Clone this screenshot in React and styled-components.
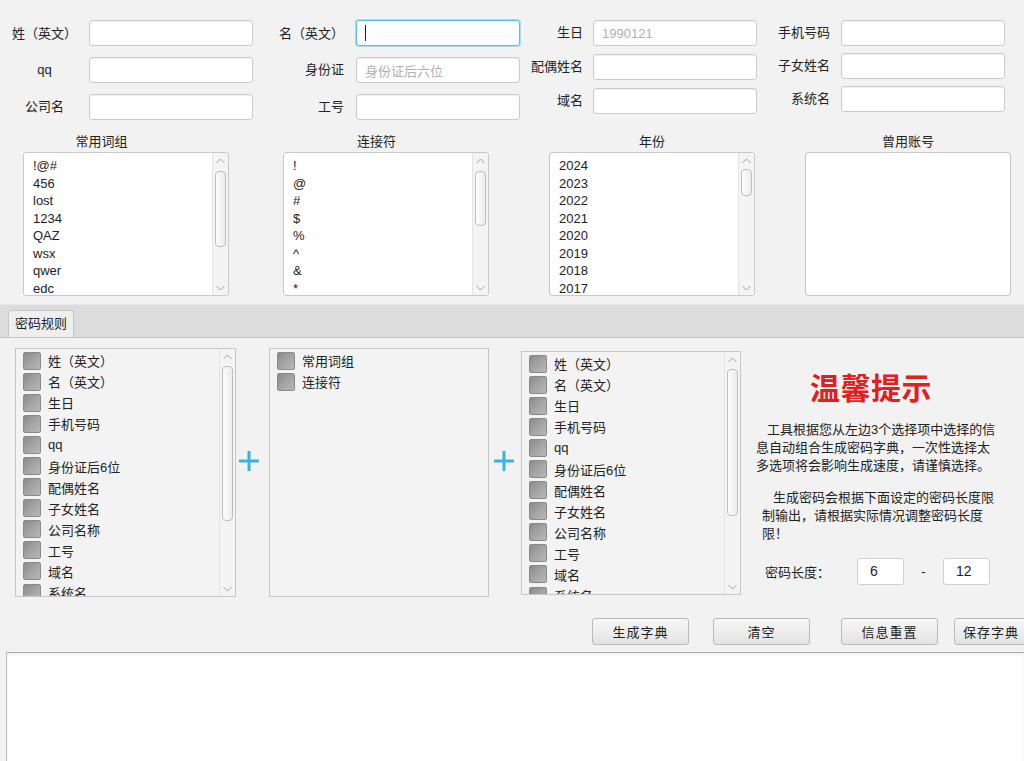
import React from 'react';
import styled, { createGlobalStyle } from 'styled-components';

const GlobalStyle = createGlobalStyle`
  html, body { margin: 0; padding: 0; background: #f2f2f2; }
  body {
    font-family: "Liberation Sans", "Noto Sans CJK SC", sans-serif;
    font-size: 13px;
    color: #222;
    text-spacing-trim: space-all;
  }
  * { box-sizing: border-box; }
`;

const Page = styled.div`
  width: 1024px;
  height: 761px;
  overflow: hidden;
  display: flex;
  flex-direction: column;
  background: #f2f2f2;
`;

/* centred full-width brackets, as the reference font draws them */
const Paren = styled.span`
  font-family: "Noto Sans CJK TC", "Noto Sans CJK SC", sans-serif;
`;

const Label = ({ text }) => (
  <>
    {text.split(/([（）])/).filter(Boolean).map((part, i) =>
      part === '（' || part === '）' ? <Paren key={i}>{part}</Paren> : <React.Fragment key={i}>{part}</React.Fragment>
    )}
  </>
);

/* ---------- top form ---------- */
const TopForm = styled.div`
  display: flex;
  align-items: flex-start;
  padding-top: 20px;
  height: 120px;
`;

const FieldColumn = styled.div`
  display: grid;
  grid-template-columns: ${p => p.$labelWidth}px 164px;
  row-gap: ${p => p.$gap}px;
`;

const FieldLabel = styled.div`
  height: 26px;
  line-height: 26px;
  text-align: ${p => p.$align};
  padding-right: ${p => p.$pad}px;
  white-space: nowrap;
  font-size: 13px;
  color: #222;
`;

const Field = styled.div`
  height: 26px;
  background: #fff;
  border: 1px solid ${p => (p.$focused ? '#5cc0e6' : '#cbcbcb')};
  border-radius: 3px;
  box-shadow: ${p => (p.$focused ? '0 0 0 1px #a6dcf1' : 'inset 0 1px 1px rgba(0,0,0,0.06)')};
  padding-left: 8px;
  display: flex;
  align-items: center;
  color: #b0b0b0;
  font-size: 13px;
  white-space: nowrap;
`;

const Caret = styled.span`
  width: 1px;
  height: 16px;
  background: #222;
`;

/* ---------- lists ---------- */
const ListsRow = styled.div`
  display: flex;
  margin-top: 13px;
`;

const ListGroup = styled.div`
  display: flex;
  flex-direction: column;
  margin-left: ${p => p.$left}px;
  width: 206px;
`;

const GroupTitle = styled.div`
  height: 18px;
  line-height: 18px;
  text-align: center;
  padding-right: ${p => p.$shift}px;
  font-size: 13px;
`;

const ListBox = styled.div`
  margin-top: 1px;
  height: 144px;
  background: #fff;
  border: 1px solid #c9c9c9;
  border-radius: 3px;
  display: flex;
  overflow: hidden;
`;

const ListItems = styled.div`
  flex: 1;
  padding: 4px 0 0 9px;
  line-height: 17.5px;
  font-size: 13px;
  overflow: hidden;
`;

const ScrollBar = styled.div`
  width: 16px;
  display: flex;
  flex-direction: column;
  align-items: center;
  background: #f4f4f4;
  border-left: 1px solid #e4e4e4;
`;

const ArrowCell = styled.div`
  height: 15px;
  display: flex;
  align-items: center;
  justify-content: center;
  flex-shrink: 0;
`;

const Track = styled.div`
  flex: 1;
  width: 100%;
  display: flex;
  flex-direction: column;
  align-items: center;
`;

const Thumb = styled.div`
  margin-top: ${p => p.$top}px;
  height: ${p => p.$height}px;
  width: 11px;
  border: 1px solid #bdbdbd;
  border-radius: 4px;
  background: linear-gradient(to right, #fdfdfd, #ececec);
`;

const Chevron = ({ down }) => (
  <svg width="9" height="6" viewBox="0 0 9 6">
    <polyline
      points={down ? '0.5,1 4.5,5 8.5,1' : '0.5,5 4.5,1 8.5,5'}
      fill="none"
      stroke="#a0a0a0"
      strokeWidth="1"
    />
  </svg>
);

const Scroller = ({ top, height }) => (
  <ScrollBar>
    <ArrowCell><Chevron /></ArrowCell>
    <Track><Thumb $top={top} $height={height} /></Track>
    <ArrowCell><Chevron down /></ArrowCell>
  </ScrollBar>
);

/* ---------- tabs ---------- */
const TabBar = styled.div`
  margin-top: 8px;
  height: 34px;
  background: #dcdcdc;
  border-top: 1px solid #e8e8e8;
  border-bottom: 1px solid #c2c2c2;
  display: flex;
  align-items: flex-end;
  padding-left: 8px;
`;

const Tab = styled.div`
  height: 27px;
  padding: 0 6px;
  background: #efefef;
  border: 1px solid #c6c6c6;
  border-bottom: none;
  border-radius: 3px 3px 0 0;
  line-height: 26px;
  font-size: 13px;
`;

/* ---------- rules ---------- */
const RulesArea = styled.div`
  display: flex;
  align-items: flex-start;
  padding: 10px 0 0 15px;
  height: 259px;
`;

const CheckList = styled.div`
  width: ${p => p.$width}px;
  height: ${p => p.$height}px;
  margin-top: ${p => p.$top}px;
  background: #f3f3f3;
  border: 1px solid #c6c6c6;
  display: flex;
  overflow: hidden;
`;

const CheckItems = styled.div`
  flex: 1;
  padding-top: 1px;
  overflow: hidden;
`;

const CheckRow = styled.div`
  height: 21.1px;
  display: flex;
  align-items: center;
  gap: 7px;
  padding-left: 7px;
  font-size: 13px;
  white-space: nowrap;
`;

const CheckSquare = styled.span`
  width: 18px;
  height: 18px;
  flex-shrink: 0;
  border: 1px solid #8a8a8a;
  border-radius: 2px;
  background: linear-gradient(135deg, #8b8b8b 0%, #a6a6a6 55%, #b8b8b8 100%);
`;

const PlusCol = styled.div`
  width: ${p => p.$width}px;
  padding: 103px 0 0 ${p => p.$pad}px;
`;

const PlusIcon = () => (
  <svg width="20" height="20" viewBox="0 0 20 20">
    <rect x="0" y="8.5" width="20" height="3" fill="#3db2df" />
    <rect x="8.5" y="0" width="3" height="20" fill="#3db2df" />
  </svg>
);

const InfoPanel = styled.div`
  margin-left: 15px;
  flex: 1;
  display: flex;
  flex-direction: column;
  padding-top: 23px;
`;

const InfoTitle = styled.div`
  padding-left: 54px;
  font-size: 30px;
  line-height: 36px;
  font-weight: 700;
  color: #e0201e;
  letter-spacing: 0.5px;
`;

const InfoText = styled.div`
  margin-top: 14px;
  padding-left: ${p => p.$left}px;
  font-size: 13px;
  line-height: 18px;
  color: #222;
  white-space: nowrap;
`;

const InfoLine = styled.div`
  padding-left: ${p => p.$indent}px;
`;

const LengthRow = styled.div`
  margin-top: 15px;
  display: flex;
  align-items: center;
  padding-left: 9px;
  height: 27px;
`;

const LengthLabel = styled.span`
  width: 92px;
  font-size: 13px;
`;

const SmallField = styled.div`
  width: 47px;
  height: 27px;
  background: #fff;
  border: 1px solid #d0d0d0;
  border-radius: 3px;
  padding-left: 12px;
  line-height: 25px;
  font-size: 14px;
`;

const Dash = styled.span`
  width: 39px;
  text-align: center;
  font-size: 13px;
`;

/* ---------- buttons ---------- */
const ButtonRow = styled.div`
  display: flex;
  margin-top: 21px;
  height: 27px;
  flex-shrink: 0;
`;

const Button = styled.div`
  flex-shrink: 0;
  margin-left: ${p => p.$left}px;
  width: ${p => p.$width}px;
  height: 27px;
  border: 1px solid #b9b9b9;
  border-radius: 3px;
  background: linear-gradient(to bottom, #f7f7f7, #e3e3e3);
  display: flex;
  align-items: center;
  justify-content: center;
  font-size: 13px;
  letter-spacing: 1px;
  color: #222;
`;

const Output = styled.div`
  margin: 7px 0 0 6px;
  flex: 1;
  background: #fff;
  border-top: 1px solid #a9a9a9;
  border-left: 1px solid #bcbcbc;
  box-shadow: inset 0 2px 3px rgba(0,0,0,0.06);
`;

/* ---------- data ---------- */
const formColumns = [
  {
    labelWidth: 89, gap: 11, align: 'center', pad: 0,
    fields: [{ label: '姓（英文）' }, { label: 'qq' }, { label: '公司名' }],
  },
  {
    labelWidth: 103, gap: 11, align: 'right', pad: 12,
    fields: [{ label: '名（英文）', focused: true }, { label: '身份证', placeholder: '身份证后六位' }, { label: '工号' }],
  },
  {
    labelWidth: 73, gap: 8, align: 'right', pad: 10,
    fields: [{ label: '生日', placeholder: '1990121' }, { label: '配偶姓名' }, { label: '域名' }],
  },
  {
    labelWidth: 84, gap: 7, align: 'right', pad: 11,
    fields: [{ label: '手机号码' }, { label: '子女姓名' }, { label: '系统名' }],
  },
];

const lists = [
  { title: '常用词组', left: 23, shift: 49, items: ['!@#', '456', 'lost', '1234', 'QAZ', 'wsx', 'qwer', 'edc'], thumb: [3, 76] },
  { title: '连接符', left: 54, shift: 19, items: ['!', '@', '#', '$', '%', '^', '&', '*'], thumb: [3, 55] },
  { title: '年份', left: 60, shift: 0, items: ['2024', '2023', '2022', '2021', '2020', '2019', '2018', '2017'], thumb: [1, 27] },
  { title: '曾用账号', left: 50, shift: 0, items: [], thumb: null },
];

const ruleItems = ['姓（英文）', '名（英文）', '生日', '手机号码', 'qq', '身份证后6位', '配偶姓名', '子女姓名', '公司名称', '工号', '域名', '系统名'];

const CheckPanel = ({ items, width, height, top, thumb }) => (
  <CheckList $width={width} $height={height} $top={top}>
    <CheckItems>
      {items.map(t => (
        <CheckRow key={t}><CheckSquare /><span><Label text={t} /></span></CheckRow>
      ))}
    </CheckItems>
    {thumb && <Scroller top={thumb[0]} height={thumb[1]} />}
  </CheckList>
);

export default function App() {
  return (
    <Page>
      <GlobalStyle />
      <TopForm>
        {formColumns.map((col, ci) => (
          <FieldColumn key={ci} $labelWidth={col.labelWidth} $gap={col.gap}>
            {col.fields.map(f => (
              <React.Fragment key={f.label}>
                <FieldLabel $align={col.align} $pad={col.pad}><Label text={f.label} /></FieldLabel>
                <Field $focused={f.focused}>
                  {f.focused ? <Caret /> : f.placeholder}
                </Field>
              </React.Fragment>
            ))}
          </FieldColumn>
        ))}
      </TopForm>

      <ListsRow>
        {lists.map(l => (
          <ListGroup key={l.title} $left={l.left}>
            <GroupTitle $shift={l.shift}>{l.title}</GroupTitle>
            <ListBox>
              <ListItems>
                {l.items.map(it => <div key={it}>{it}</div>)}
              </ListItems>
              {l.thumb && <Scroller top={l.thumb[0]} height={l.thumb[1]} />}
            </ListBox>
          </ListGroup>
        ))}
      </ListsRow>

      <TabBar>
        <Tab>密码规则</Tab>
      </TabBar>

      <RulesArea>
        <CheckPanel items={ruleItems} width={221} height={249} top={0} thumb={[2, 155]} />
        <PlusCol $width={33} $pad={3}><PlusIcon /></PlusCol>
        <CheckPanel items={['常用词组', '连接符']} width={220} height={249} top={0} thumb={null} />
        <PlusCol $width={32} $pad={5}><PlusIcon /></PlusCol>
        <CheckPanel items={ruleItems} width={220} height={244} top={3} thumb={[2, 147]} />
        <InfoPanel>
          <InfoTitle>温馨提示</InfoTitle>
          <InfoText $left={0}>
            <InfoLine $indent={11}>工具根据您从左边3个选择项中选择的信</InfoLine>
            <InfoLine $indent={0}>息自动组合生成密码字典，一次性选择太</InfoLine>
            <InfoLine $indent={0}>多选项将会影响生成速度，请谨慎选择。</InfoLine>
          </InfoText>
          <InfoText $left={6}>
            <InfoLine $indent={11}>生成密码会根据下面设定的密码长度限</InfoLine>
            <InfoLine $indent={0}>制输出，请根据实际情况调整密码长度</InfoLine>
            <InfoLine $indent={0}>限！</InfoLine>
          </InfoText>
          <LengthRow>
            <LengthLabel>密码长度：</LengthLabel>
            <SmallField>6</SmallField>
            <Dash>-</Dash>
            <SmallField>12</SmallField>
          </LengthRow>
        </InfoPanel>
      </RulesArea>

      <ButtonRow>
        <Button $left={592} $width={97}>生成字典</Button>
        <Button $left={24} $width={97}>清空</Button>
        <Button $left={31} $width={97}>信息重置</Button>
        <Button $left={16} $width={74}>保存字典</Button>
      </ButtonRow>

      <Output />
    </Page>
  );
}
